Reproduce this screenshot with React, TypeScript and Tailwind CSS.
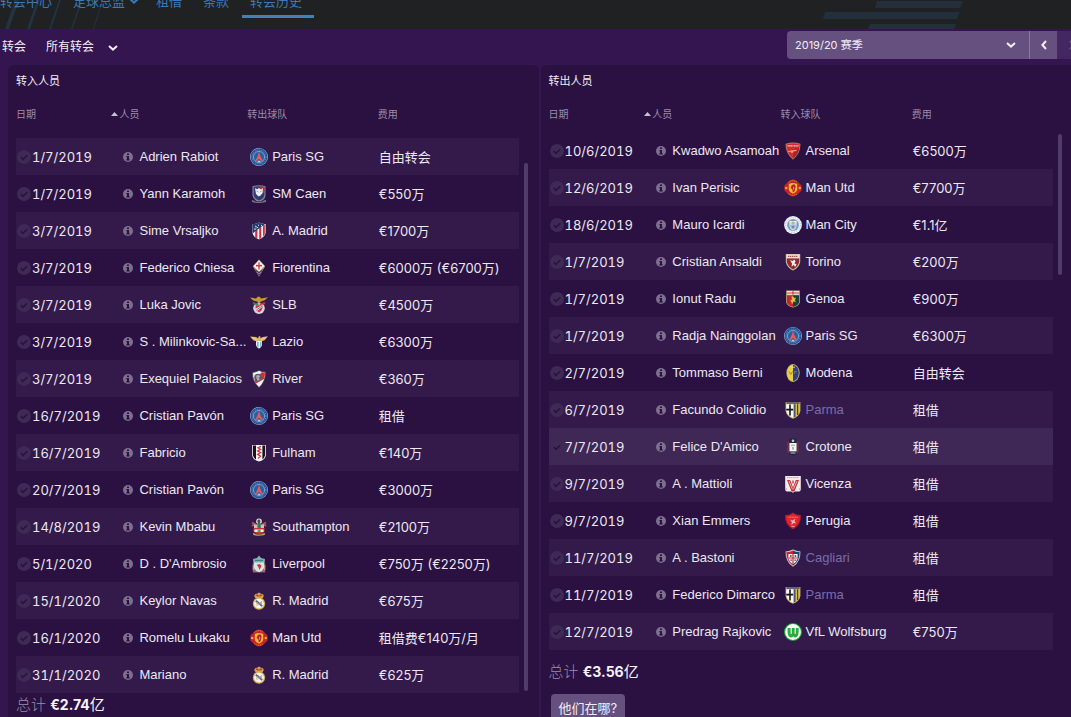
import type { ReactNode } from 'react'
import clsx from 'clsx'

type ClubKey =
  | 'psg' | 'caen' | 'atletico' | 'fiorentina' | 'benfica' | 'lazio' | 'river' | 'fulham'
  | 'southampton' | 'liverpool' | 'madrid' | 'united' | 'arsenal' | 'city' | 'torino' | 'genoa'
  | 'modena' | 'parma' | 'crotone' | 'vicenza' | 'perugia' | 'cagliari' | 'wolfsburg'

type Transfer = {
  date: string
  name: string
  crest: ClubKey
  club: string
  fee: string
  muted?: boolean
  active?: boolean
}

const NAV_ITEMS = [
  { label: '转会中心' },
  { label: '足球总监', menu: true },
  { label: '租借' },
  { label: '条款' },
  { label: '转会历史', current: true },
]

const TRANSFERS_IN: Transfer[] = [
  { date: '1/7/2019', name: 'Adrien Rabiot', crest: 'psg', club: 'Paris SG', fee: '自由转会' },
  { date: '1/7/2019', name: 'Yann Karamoh', crest: 'caen', club: 'SM Caen', fee: '€550万' },
  { date: '3/7/2019', name: 'Sime Vrsaljko', crest: 'atletico', club: 'A. Madrid', fee: '€1700万' },
  { date: '3/7/2019', name: 'Federico Chiesa', crest: 'fiorentina', club: 'Fiorentina', fee: '€6000万 (€6700万)' },
  { date: '3/7/2019', name: 'Luka Jovic', crest: 'benfica', club: 'SLB', fee: '€4500万' },
  { date: '3/7/2019', name: 'S . Milinkovic-Sa...', crest: 'lazio', club: 'Lazio', fee: '€6300万' },
  { date: '3/7/2019', name: 'Exequiel Palacios', crest: 'river', club: 'River', fee: '€360万' },
  { date: '16/7/2019', name: 'Cristian Pavón', crest: 'psg', club: 'Paris SG', fee: '租借' },
  { date: '16/7/2019', name: 'Fabricio', crest: 'fulham', club: 'Fulham', fee: '€140万' },
  { date: '20/7/2019', name: 'Cristian Pavón', crest: 'psg', club: 'Paris SG', fee: '€3000万' },
  { date: '14/8/2019', name: 'Kevin Mbabu', crest: 'southampton', club: 'Southampton', fee: '€2100万' },
  { date: '5/1/2020', name: "D . D'Ambrosio", crest: 'liverpool', club: 'Liverpool', fee: '€750万 (€2250万)' },
  { date: '15/1/2020', name: 'Keylor Navas', crest: 'madrid', club: 'R. Madrid', fee: '€675万' },
  { date: '16/1/2020', name: 'Romelu Lukaku', crest: 'united', club: 'Man Utd', fee: '租借费€140万/月' },
  { date: '31/1/2020', name: 'Mariano', crest: 'madrid', club: 'R. Madrid', fee: '€625万' },
]

const TRANSFERS_OUT: Transfer[] = [
  { date: '10/6/2019', name: 'Kwadwo Asamoah', crest: 'arsenal', club: 'Arsenal', fee: '€6500万' },
  { date: '12/6/2019', name: 'Ivan Perisic', crest: 'united', club: 'Man Utd', fee: '€7700万' },
  { date: '18/6/2019', name: 'Mauro Icardi', crest: 'city', club: 'Man City', fee: '€1.1亿' },
  { date: '1/7/2019', name: 'Cristian Ansaldi', crest: 'torino', club: 'Torino', fee: '€200万' },
  { date: '1/7/2019', name: 'Ionut Radu', crest: 'genoa', club: 'Genoa', fee: '€900万' },
  { date: '1/7/2019', name: 'Radja Nainggolan', crest: 'psg', club: 'Paris SG', fee: '€6300万' },
  { date: '2/7/2019', name: 'Tommaso Berni', crest: 'modena', club: 'Modena', fee: '自由转会' },
  { date: '6/7/2019', name: 'Facundo Colidio', crest: 'parma', club: 'Parma', fee: '租借', muted: true },
  { date: '7/7/2019', name: "Felice D'Amico", crest: 'crotone', club: 'Crotone', fee: '租借', active: true },
  { date: '9/7/2019', name: 'A . Mattioli', crest: 'vicenza', club: 'Vicenza', fee: '租借' },
  { date: '9/7/2019', name: 'Xian Emmers', crest: 'perugia', club: 'Perugia', fee: '租借' },
  { date: '11/7/2019', name: 'A . Bastoni', crest: 'cagliari', club: 'Cagliari', fee: '租借', muted: true },
  { date: '11/7/2019', name: 'Federico Dimarco', crest: 'parma', club: 'Parma', fee: '租借', muted: true },
  { date: '12/7/2019', name: 'Predrag Rajkovic', crest: 'wolfsburg', club: 'VfL Wolfsburg', fee: '€750万' },
]

const CRESTS: Record<ClubKey, ReactNode> = {
  psg: (
    <>
      <circle cx="9" cy="9" r="9" fill="#8fb0d4" />
      <circle cx="9" cy="9" r="8.4" fill="#1f4f93" />
      <circle cx="9" cy="9" r="6.9" fill="none" stroke="#6f93c2" strokeWidth="1" strokeDasharray="1.2 0.8" />
      <circle cx="9" cy="9" r="5.6" fill="#2a5ea6" stroke="#b9cde4" strokeWidth="0.6" />
      <path d="M9 3.4 L10.2 8 L13 13.2 L10.6 12.6 L9 10.4 L7.4 12.6 L5 13.2 L7.8 8 Z" fill="#ee5a4e" />
      <path d="M7.8 12.8h2.4v1H7.800z" fill="#e8e3ee" />
    </>
  ),
  caen: (
    <>
      <path d="M2.5 1.2 Q9 -0.6 15.5 1.2 V10.5 Q15 15 9 17 Q3 15 2.5 10.5 Z" fill="#8d8796" />
      <path d="M3.6 2 Q6 1.2 9 1.2 V15.6 Q4 13.8 3.6 10 Z" fill="#2c4177" />
      <path d="M9 1.2 Q12 1.2 14.4 2 V10 Q14 13.8 9 15.6 Z" fill="#293d72" />
      <path d="M9.5 1.3 L14.4 2 V7 L11 9 Z" fill="#c8283c" />
      <path d="M5 3 L7 4.2 L9 3 L11 4.4 L13 3 L12.6 8 L10.6 10.4 L8.6 11.4 L6 9 Z" fill="#eceef3" />
      <path d="M6.6 6 L8.4 7 M9.8 7 L11.6 6" stroke="#7783a3" strokeWidth="0.7" />
      <path d="M2 14.8 Q9 18.4 16 14.8 V17 Q9 19 2 17 Z" fill="#77717f" />
      <path d="M5 16.6 H13" stroke="#35285a" strokeWidth="0.6" />
    </>
  ),
  atletico: (
    <>
      <path d="M2.4 2 Q6 2.4 9 0.6 Q12 2.4 15.6 2 V11 Q14.6 15 9 17.6 Q3.4 15 2.4 11 Z" fill="#f2f0f4" />
      <path d="M5.2 8 H7.4 V16.4 L5.2 15 Z M9.2 5 H11.2 V16.2 L9.2 17 Z M13 3 H14.8 V12 L13 14.6 Z" fill="#c53140" />
      <path d="M2.4 2 Q6 2.4 9 0.6 Q12 2.4 15 2 L2.6 11.4 Z" fill="#273d70" />
      <path d="M5 4.2h1M8 3.2h1M11 3.4h1M4 7h1M7 5.6h1" stroke="#dce3ef" strokeWidth="1" />
      <path d="M6.6 4 L5.4 8" stroke="#b9c5d5" strokeWidth="0.7" />
    </>
  ),
  fiorentina: (
    <>
      <path d="M9 0.4 L15.2 7.2 L9 17.8 L2.8 7.2 Z" fill="#bda06a" />
      <path d="M9 1.2 L14.4 7 L9 12.4 L3.6 7 Z" fill="#f7f4f5" />
      <path d="M4.4 9.4 L9 13 L13.6 9.4 L9 17.2 Z" fill="#51376f" />
      <path d="M9 3.2 V10.6 M6.6 7.4 Q6 5.4 9 7.6 Q12 5.4 11.400 7.4" stroke="#cf2c38" strokeWidth="1.2" fill="none" />
      <path d="M7 13 L9 15 L11 13" stroke="#ac9bb8" strokeWidth="0.7" fill="none" />
    </>
  ),
  benfica: (
    <>
      <path d="M0 1.6 L6 2.6 L8 0.4 L10 1 L11 2.6 L18 1.2 L14.6 4.2 L11 5.6 L9 7 L7 5.6 L3.2 4.4 Z" fill="#c89a2d" />
      <circle cx="9" cy="12.2" r="5.8" fill="#d5d3dc" />
      <path d="M3 6 L8.4 7.4 L8.4 9 L2.6 8.2 Z" fill="#2c7a47" />
      <path d="M15 6 L9.6 7.4 L9.6 9 L15.4 8.2 Z" fill="#c32f3a" />
      <path d="M5.6 9.2 H12.4 V12 Q12 15 9 16.2 Q6 15 5.6 12 Z" fill="#d3333f" />
      <path d="M5.6 12.8 L11.6 9.200 L12.4 10.800 L7 15 Z" fill="#f0f1f4" />
      <path d="M6.400 14 L12 10" stroke="#49699b" strokeWidth="0.9" />
    </>
  ),
  lazio: (
    <>
      <path d="M6 7.2 H12 V12 Q11.6 14.6 9 15.8 Q6.4 14.6 6 12 Z" fill="#e9f2f8" />
      <path d="M7 9 H8.6 V14.6 L7 13 Z M10.2 9 H11.4 V13 L10.2 14.4 Z" fill="#69b2dc" />
      <path d="M0 3.4 L6 4 L8 5.2 L9 3 L10.4 3.4 L10.6 5.2 L12.6 4 L18 3.2 L14.6 7.2 L11.2 8.4 L9 7.2 L6.8 8.4 L3.2 7.2 Z" fill="#d9b55c" />
      <path d="M2 4.6 L7 6.6 M16 4.6 L11 6.6" stroke="#f1df9e" strokeWidth="0.8" />
    </>
  ),
  river: (
    <>
      <path d="M2.6 2.4 Q6 2 9 0.4 Q12 2 15.4 2 Q16 11 9 17.6 Q2 11 2.6 2.4 Z" fill="#f3f1f2" stroke="#3b3a44" strokeWidth="0.7" />
      <path d="M11.6 2.2 L15 2.4 Q15 6 14 9 L6 13.6 L4.4 11 Z" fill="#cd313a" />
      <circle cx="8" cy="7.6" r="3.8" fill="#5b5963" />
      <path d="M6 6.2h4M6 8h3.6M7 9.8h2.6M8 4.8v5.6" stroke="#d8d5dc" strokeWidth="0.7" />
    </>
  ),
  fulham: (
    <>
      <path d="M2.2 1 H15.8 V12 Q14.4 16.4 9 17.6 Q3.6 16.4 2.2 12 Z" fill="#f7f5f5" />
      <path d="M3 1.6 H6 V15.6 Q3.6 14 3 11.6 Z M12.4 1.6 H15 V11.6 Q14.4 14 12.4 15.4 Z" fill="#17131b" />
      <path d="M11 2.4 L8 3.8 L10.6 5.4 L7.6 7 L10.6 8.6 L7.6 10.4 L10.6 12.2 L8 14.4" stroke="#c92a35" strokeWidth="1.2" fill="none" />
    </>
  ),
  southampton: (
    <>
      <circle cx="9" cy="3.4" r="2.8" fill="#e8e4e4" />
      <path d="M9 1 L10.6 3 L9.6 5.4 L8 5 L7.2 2.8 Z" fill="#4b4850" />
      <path d="M2 4.4 L5.6 6.6 M16 4.4 L12.4 6.6 M2 8 L4.6 6 M16 8 L13.4 6" stroke="#b4565c" strokeWidth="1.8" />
      <path d="M4 6.4 H14 V11 H4 Z" fill="#c7bfc4" />
      <path d="M7.4 5 h3.4 v6 H7.400z" fill="#3b7b46" />
      <path d="M3.4 10 H14.6 V13.4 Q12 16.4 9 17 Q6 16.4 3.4 13.4 Z" fill="#c9303a" />
      <path d="M4.4 11.4 H13.6 V14 H4.4 Z" fill="#f1ecec" />
      <path d="M7.6 11.6 h3 v2.600 h-3z" fill="#55a05c" />
      <path d="M3 15 Q9 17.8 15 15 L14.6 17 Q9 18.6 3.4 17 Z" fill="#d6b347" />
      <path d="M5.400 16.8 h7.200" stroke="#4b3026" strokeWidth="0.5" />
    </>
  ),
  liverpool: (
    <>
      <path d="M3 4 L7 3 L9 0.6 L11 3 L15 4 L14.6 8 H3.4 Z" fill="#7fb4ae" />
      <path d="M5 5.4 H13" stroke="#2f7672" strokeWidth="0.9" />
      <path d="M2.8 8 H15.2 V17.4 H2.8 Z" fill="#a3656d" />
      <path d="M4 7.4 H14 V13 Q12.6 16.4 9 17.2 Q5.4 16.4 4 13 Z" fill="#d5e6e3" />
      <path d="M9.8 9 L11.600 11 L9.4 15 L8.6 12.4 L6.800 9.800 Z" fill="#cd3843" />
      <path d="M3.2 10 v5 M14.8 10 v5" stroke="#d8b8a9" strokeWidth="0.9" />
    </>
  ),
  madrid: (
    <>
      <path d="M4.4 4.6 Q3.8 2 7 1.8 L9 0.4 L11 1.8 Q14.2 2 13.6 4.6 L12.4 6.4 H5.6 Z" fill="#d3a544" />
      <path d="M5.8 3.6 Q7.4 2.2 8.4 4.4 M9.6 4.4 Q10.6 2.2 12.2 3.6" stroke="#b6334a" strokeWidth="1.3" fill="none" />
      <circle cx="9" cy="11.6" r="6.2" fill="#d8b252" />
      <circle cx="9" cy="11.6" r="4.9" fill="#f4f3f2" />
      <path d="M5.200 9.400 L6.600 8 L12.800 13.200 L11.600 14.800 Z" fill="#4a67a2" />
      <path d="M7 13.8 V10 L9.2 12.6 L11.4 9.4 V13" stroke="#caa144" strokeWidth="0.9" fill="none" />
    </>
  ),
  united: (
    <>
      <path d="M4 3 Q9 -1.8 14 3 L17.6 6.6 V11.4 L14 15 Q9 19.8 4 15 L0.4 11.4 V6.6 Z" fill="#c6232c" />
      <path d="M4.4 3.4 Q9 -0.2 13.6 3.4 M4.4 14.6 Q9 18.200 13.6 14.6" stroke="#f2992b" strokeWidth="0.8" strokeDasharray="1.2 0.8" fill="none" />
      <circle cx="2.2" cy="9" r="1.3" fill="#f2a62b" />
      <circle cx="15.8" cy="9" r="1.3" fill="#f2a62b" />
      <path d="M4.8 5 Q9 3 13.2 5 V11 Q12.400 13.6 9 14.800 Q5.600 13.6 4.8 11 Z" fill="#f4b92f" />
      <path d="M7.8 6 L10.4 5.2 L11.6 7.6 L10.6 12.2 L8.8 13.4 L8.4 10.4 L6.6 9 Z" fill="#b81f2a" />
      <path d="M9.6 7.8 v3" stroke="#f3bd31" strokeWidth="0.8" />
    </>
  ),
  arsenal: (
    <>
      <path d="M1.6 1.8 Q9 -0.8 16.4 1.8 Q17 11 9 17.8 Q1 11 1.6 1.8 Z" fill="#a97e50" />
      <path d="M2.6 2.6 Q9 0.4 15.4 2.6 Q15.6 10.6 9 16.6 Q2.4 10.6 2.6 2.6 Z" fill="#d9272f" />
      <path d="M10.6 7 L15.2 6 Q14.4 12 9 16.6 Z" fill="#a92030" />
      <path d="M3.6 3.8 H14.4" stroke="#f5d6d7" strokeWidth="1.3" strokeDasharray="1.2 0.4" />
      <path d="M4 9 L12.6 7.8 V9 L9 9.6 V10.800 H6.8 V9.800 H4 Z" fill="#dfae6b" />
    </>
  ),
  city: (
    <>
      <circle cx="9" cy="9" r="8.9" fill="#f2f5f8" />
      <circle cx="9" cy="9" r="7.3" fill="none" stroke="#9db1ca" strokeWidth="0.8" strokeDasharray="1.4 1" />
      <circle cx="9" cy="9" r="5.9" fill="#6f9dc8" />
      <path d="M5.4 5 H12.6 V10 Q12 13 9 14.4 Q6 13 5.4 10 Z" fill="#edf0ef" />
      <path d="M6 8.6 H12 V10 Q11.4 12.6 9 13.8 Q6.6 12.6 6 10 Z" fill="#8fbde0" />
      <path d="M6.6 7 H11.4 M9 5.6 V8.4" stroke="#c4a150" strokeWidth="1.2" />
      <path d="M9 9.400 L10.400 11 L9 12.600 L7.600 11 Z" fill="#c4606a" />
    </>
  ),
  torino: (
    <>
      <path d="M1.8 1 H16.2 V9 Q15 14.6 9 17.6 Q3 14.6 1.8 9 Z" fill="#d6c2a9" />
      <path d="M2.8 5.4 H15.2 V9 Q14 13.8 9 16.4 Q4 13.8 2.8 9 Z" fill="#8d2d2f" />
      <path d="M2.8 1.8 H15.2 V5 H2.8 Z" fill="#eee4e4" />
      <path d="M4 3.4 H14" stroke="#a24b4b" strokeWidth="1.4" strokeDasharray="1.4 0.6" />
      <path d="M6 7 L8.6 8 L10.4 6.4 L11.6 8.4 L10.4 10.2 L12.6 11.4 L11 14 L9.8 11.8 L7.6 13.8 L8 10.6 Z" fill="#f3ecec" />
    </>
  ),
  genoa: (
    <>
      <path d="M2.2 0.6 H15.8 V12.6 Q14.6 16.4 9 17.6 Q3.4 16.4 2.2 12.6 Z" fill="#c6ae6a" />
      <path d="M3 1.2 H15 V4.6 H3 Z" fill="#f6f3f1" />
      <path d="M9 1.2 V4.6 M3 3 H15" stroke="#c82e37" strokeWidth="1.2" />
      <path d="M3 5.2 H9 V16.8 Q4 15.6 3 12.4 Z" fill="#c4252f" />
      <path d="M9 5.2 H15 V12.4 Q14 15.6 9 16.8 Z" fill="#1b3f3e" />
      <path d="M7.400 6.8 L9 6.200 L10.400 8 L12 7.400 L11 10 L11.800 12 L9.6 11.600 L8 14.400 L7.400 12 L6.200 10.4 L8 9.4 Z" fill="#dfbd45" />
    </>
  ),
  modena: (
    <>
      <ellipse cx="9" cy="9" rx="6.6" ry="8.9" fill="#c8b873" />
      <path d="M9 0.9 A5.8 8.1 0 0 0 9 17.1 Z" fill="#e7ce45" />
      <path d="M9 0.9 A5.8 8.1 0 0 1 9 17.1 Z" fill="#313f86" />
      <path d="M5 7.4 L6.8 10.4 L8.6 7.4" stroke="#937e2e" strokeWidth="0.9" fill="none" />
      <path d="M10.4 10 V7.6 H12.6" stroke="#8f8c80" strokeWidth="0.7" fill="none" />
      <path d="M7 3.2 h4" stroke="#f4ecb8" strokeWidth="0.8" />
    </>
  ),
  parma: (
    <>
      <path d="M1.6 1 H16.4 V10 Q15.4 15.4 9 17.8 Q2.6 15.4 1.6 10 Z" fill="#c6b366" />
      <path d="M2.2 3.2 H9 V17 Q3.4 14.6 2.2 9.8 Z" fill="#f6f6f4" />
      <path d="M6 3.4 V14.6 M2.2 8.6 H9.4" stroke="#17151c" strokeWidth="1.6" />
      <path d="M9.4 3.2 H15.8 V9.8 Q14.6 14.6 9.4 17 Z" fill="#e4c23c" />
      <path d="M10.8 3.2 V16 M13.6 3.2 V14" stroke="#2f4280" strokeWidth="1.3" />
      <path d="M2.4 2 H15.6" stroke="#2c4074" strokeWidth="1.3" />
    </>
  ),
  crotone: (
    <>
      <path d="M5 1.2 Q9 -0.8 13 1.2 V16 Q9 18.8 5 16 Z" fill="#1e2740" />
      <path d="M4.8 3.6 L3.6 6 L4.4 9 L3.6 12 L5 15 M13.2 3.6 L14.4 6 L13.6 9 L14.4 12 L13 15" stroke="#8f2b3d" strokeWidth="1.2" fill="none" />
      <circle cx="9" cy="2.8" r="1.3" fill="#c8ccd2" />
      <path d="M5.4 5 H12.6 V13.4 H5.4 Z" fill="#f4f4f3" />
      <path d="M7 6.8 h4 v1 h-4z M8.2 9 h1.6 v2.6 h-1.600z" fill="#9c9ca5" />
      <path d="M6.6 15 h4.8" stroke="#b8bbc5" strokeWidth="1.1" />
    </>
  ),
  vicenza: (
    <>
      <path d="M1.2 1 H16.8 V14 Q16.8 16.6 14 16.6 H11 L9 17.8 L7 16.6 H4 Q1.2 16.6 1.2 14 Z" fill="#f4eded" />
      <path d="M3 2.6 h12" stroke="#d98d92" strokeWidth="0.9" strokeDasharray="1.4 0.5" />
      <path d="M3 5 H6.2 L9 12.4 L11.8 5 H15 L10.4 16.4 H7.6 Z" fill="#c33139" />
      <path d="M5 6 L8.6 14.4 M13 6 L9.4 14.4" stroke="#f1d6d7" strokeWidth="0.7" />
      <path d="M9 5.4 v3" stroke="#c33139" strokeWidth="1.3" />
      <path d="M2.4 13 v2 M15.6 13 v2" stroke="#db9b9f" strokeWidth="0.8" />
    </>
  ),
  perugia: (
    <>
      <path d="M1 3 Q6 3 9 0.4 Q12 3 17 3 Q17.4 13 9 17.6 Q0.6 13 1 3 Z" fill="#a71d27" />
      <path d="M2 4 Q6.4 3.8 9 1.6 Q11.6 3.8 16 4 Q16.2 12.2 9 16.4 Q1.8 12.2 2 4 Z" fill="#df242e" />
      <path d="M4.4 5.2 h9.2" stroke="#ec8b8c" strokeWidth="0.9" strokeDasharray="1.2 0.4" />
      <path d="M6 7.4 L8.4 8.4 L11.6 6.6 L10.6 9 L12 11.4 L9.6 11 L7.4 13 L7.8 10 Z" fill="#e0b9b3" />
      <path d="M7.4 14.4 h3.2" stroke="#f3d7d6" strokeWidth="0.7" />
    </>
  ),
  cagliari: (
    <>
      <path d="M1.6 2.4 Q6 2.4 9 0.6 Q12 2.4 16.4 2.4 Q17 12.4 9 17.8 Q1 12.4 1.6 2.4 Z" fill="#d5d0d8" />
      <path d="M2.4 3 Q6.4 3 9 1.4 V16.8 Q2 11.8 2.4 3 Z" fill="#bf2a3b" />
      <path d="M9 1.4 Q11.6 3 15.6 3 Q16 11.8 9 16.8 Z" fill="#25416d" />
      <path d="M4.4 5 H13.6 V9.4 Q12.6 13.2 9 15 Q5.4 13.2 4.4 9.4 Z" fill="#f5f3f4" />
      <path d="M9 5 V14.8 M4.4 9 H13.6" stroke="#c42d39" strokeWidth="1.2" />
      <path d="M6 7 h1.6 M10.6 7 h1.6 M6.4 11.2 h1.4 M10.4 11.2 h1.4" stroke="#3a3340" strokeWidth="1.3" />
    </>
  ),
  wolfsburg: (
    <>
      <circle cx="9" cy="9" r="9" fill="#26a53a" />
      <circle cx="9" cy="9" r="7.9" fill="#f7fbf7" />
      <path d="M3.6 5 H6.6 V10 Q6.8 12 7.8 10.4 V5 H10.6 V10.4 Q11.4 12 11.8 10 V5 H14.6 V9 Q14.4 14.4 11.4 14.4 Q9.8 14.4 9.2 13.2 Q8.6 14.4 6.8 14.4 Q3.8 14.4 3.6 9 Z" fill="#2aab3d" />
    </>
  ),
}

function Chevron({ className }: { className?: string }) {
  return (
    <svg viewBox="0 0 10 6" aria-hidden className={clsx('h-[6px] w-[10px] shrink-0', className)}>
      <path d="M1 1 L5 4.6 L9 1" fill="none" stroke="currentColor" strokeWidth="2" />
    </svg>
  )
}

function Header() {
  return (
    <header className="relative flex h-[29px] shrink-0 flex-col justify-end overflow-hidden bg-[#1f2123] pb-[11px]">
      <svg viewBox="0 0 110 29" aria-hidden className="absolute left-0 top-0 h-[29px] w-[110px]">
        <path d="M5 29 L9 29 L19 0 L15 0 Z M27 29 L30 29 L40 0 L37 0 Z" fill="#23333f" />
        <path d="M49 29 L51 29 L61 0 L59 0 Z M71 29 L72.5 29 L82.5 0 L81 0 Z M93 29 L94 29 L103 0 L102 0 Z" fill="#23333f" />
      </svg>
      <svg viewBox="0 0 140 29" aria-hidden className="absolute right-[108px] top-0 h-[29px] w-[140px]">
        <path d="M54 1 H140 L137 8 H52 Z M2 12 H137 L134 19 H0 Z M47 24 H133 L131 29 H45 Z" fill="#23303b" />
      </svg>
      <nav className="relative -ml-2 flex gap-px text-[13px] leading-4 text-[#3b79b8]">
        {NAV_ITEMS.map((item) => (
          <a
            key={item.label}
            href="#"
            className={clsx(
              'flex items-center border-b-[3px] pb-[6px] pl-2',
              item.menu ? 'gap-1 pr-2' : 'pr-3',
              item.current ? 'border-[#4080bd]' : 'border-transparent'
            )}
          >
            {item.label}
            {item.menu && <Chevron />}
          </a>
        ))}
      </nav>
    </header>
  )
}

function FilterBar() {
  return (
    <div className="flex h-9 shrink-0 items-center overflow-hidden bg-[#34154f] pl-[2px] text-xs text-[#f1edf4]">
      <label htmlFor="filter">转会</label>
      <div className="relative ml-5">
        <select id="filter" className="w-[72px] appearance-none bg-transparent outline-none">
          <option>所有转会</option>
        </select>
        <Chevron className="pointer-events-none absolute right-0 top-[6px]" />
      </div>

      <div className="-mr-4 mb-1 ml-auto flex h-7">
        <div className="relative">
          <select
            aria-label="赛季"
            className="h-full w-[242px] appearance-none rounded-l bg-[#66507f] pl-2 text-[11px] outline-none"
          >
            <option>2019/20 赛季</option>
          </select>
          <Chevron className="pointer-events-none absolute right-[13px] top-[11px]" />
        </div>
        <button
          type="button"
          aria-label="上一赛季"
          className="flex w-7 items-center justify-center border-l border-[#8b79a0] bg-[#66507f]"
        >
          <Chevron className="rotate-90" />
        </button>
        <button
          type="button"
          aria-label="下一赛季"
          disabled
          className="flex w-[30px] items-center justify-center bg-[#432762] text-[#6b5482]"
        >
          <Chevron className="-rotate-90" />
        </button>
      </div>
    </div>
  )
}

function CheckBadge() {
  return (
    <svg viewBox="0 0 14 14" aria-hidden className="size-[14px] shrink-0">
      <circle cx="7" cy="7" r="7" fill="#3f2955" />
      <path d="M3.8 7.2 L6 9.3 L10.2 5.2" fill="none" stroke="#2a1343" strokeWidth="1.6" />
    </svg>
  )
}

function InfoBadge() {
  return (
    <svg viewBox="0 0 10 10" aria-hidden className="size-[10px] shrink-0">
      <circle cx="5" cy="5" r="5" fill="#7d6f8d" />
      <path d="M4 1.6h2v1.5H4z M3.4 4h2.6v3.2h.7v1.2H3.3V7.2H4V5.2h-.6z" fill="#2b1243" />
    </svg>
  )
}

type TransferTableProps = {
  clubHeading: string
  rows: Transfer[]
  stripe: 'odd' | 'even'
}

function TransferTable({ clubHeading, rows, stripe }: TransferTableProps) {
  const odd = stripe === 'odd'
  return (
    <table className="w-full table-fixed text-left text-[13px] leading-5">
      <thead className="text-[10px] text-[#9a8da6]">
        <tr className={clsx('align-top', odd ? 'h-10' : 'h-[34px]')}>
          <th className="w-[19%] pt-[6px] font-normal">日期</th>
          <th className="w-[27%] pt-[6px] font-normal">
            <span className="flex items-center gap-px">
              <svg viewBox="0 0 7 4" aria-hidden className="h-1 w-[7px]">
                <path d="M3.5 0 L7 4 H0 Z" fill="#c9c1d0" />
              </svg>
              人员
            </span>
          </th>
          <th className="w-[26%] pt-[6px] font-normal">{clubHeading}</th>
          <th className="pt-[6px] font-normal">费用</th>
        </tr>
      </thead>
      <tbody className="whitespace-nowrap text-[#ece7f0]">
        {rows.map((row) => (
          <tr
            key={row.date + row.name}
            className={clsx(
              'h-[37px]',
              row.active ? 'bg-[#3f2856]' : odd ? 'odd:bg-[#331a4b]' : 'even:bg-[#331a4b]'
            )}
          >
            <td>
              <span className="flex items-center gap-px pl-px tabular-nums">
                <CheckBadge />
                {row.date}
              </span>
            </td>
            <td className="font-['Liberation_Sans','Noto_Sans_CJK_SC',sans-serif]">
              <span className="flex items-center gap-[6px] pl-3">
                <InfoBadge />
                {row.name}
              </span>
            </td>
            <td className="font-['Liberation_Sans','Noto_Sans_CJK_SC',sans-serif]">
              <span className={clsx('flex items-center gap-1 pl-[3px]', row.muted && 'text-[#7a6da8]')}>
                <svg viewBox="0 0 18 18" aria-hidden className="size-[18px] shrink-0">
                  {CRESTS[row.crest]}
                </svg>
                {row.club}
              </span>
            </td>
            <td className="pl-px">{row.fee}</td>
          </tr>
        ))}
      </tbody>
    </table>
  )
}

function Total({ amount }: { amount: string }) {
  return (
    <p className="text-[15px] leading-6 text-[#f6f3f8]">
      <span className="font-light text-[#9a8da6]">总计</span>{' '}
      <span className="text-sm font-bold">{amount}</span>亿
    </p>
  )
}

export default function App() {
  return (
    <div className="flex h-screen flex-col overflow-hidden bg-[#34154f] font-[Inter,'Noto_Sans_CJK_SC',sans-serif]">
      <Header />
      <FilterBar />
      <main className="grid grow grid-cols-2 gap-[2px] pl-2">
        <section className="rounded-t-md bg-[#2a1142] pl-2 pr-[11px]">
          <h2 className="h-[33px] pt-[6px] text-[11px] leading-5 text-[#f1edf4]">转入人员</h2>
          <div className="flex gap-[5px]">
            <TransferTable clubHeading="转出球队" rows={TRANSFERS_IN} stripe="odd" />
            <div className="mb-[2px] mt-[65px] w-1 shrink-0 rounded-full bg-[#513b68]" />
          </div>
          <Total amount="€2.74" />
        </section>
        <section className="rounded-tl-md bg-[#2a1142] pl-2 pr-[9px]">
          <h2 className="h-[33px] pt-[6px] text-[11px] leading-5 text-[#f1edf4]">转出人员</h2>
          <div className="flex gap-[5px]">
            <TransferTable clubHeading="转入球队" rows={TRANSFERS_OUT} stripe="even" />
            <div className="mt-9 h-[141px] w-1 shrink-0 rounded-full bg-[#513b68]" />
          </div>
          <div className="pt-[10px]">
            <Total amount="€3.56" />
          </div>
          <button
            type="button"
            className="ml-[2px] mt-[10px] rounded bg-[#66507f] px-2 py-1 text-[13px] leading-5 text-[#f1edf4]"
          >
            他们在哪?
          </button>
        </section>
      </main>
    </div>
  )
}
